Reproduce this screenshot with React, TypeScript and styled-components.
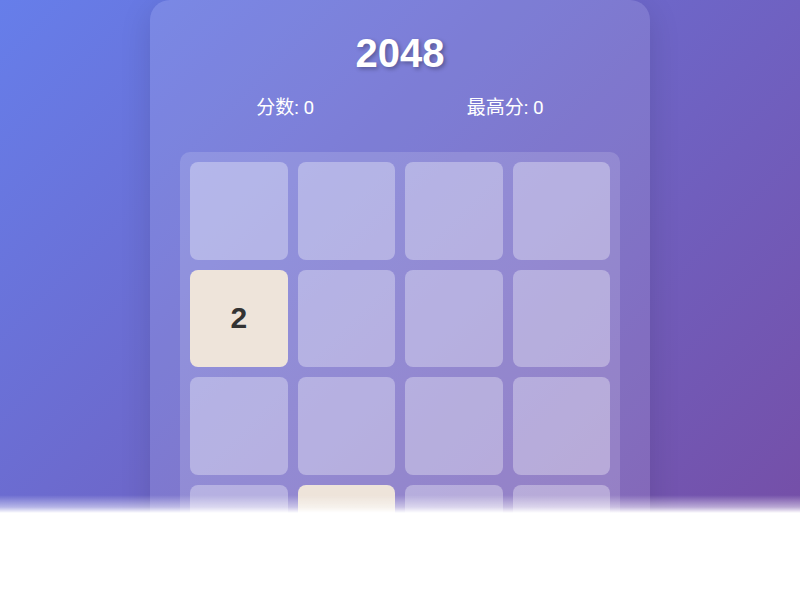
import styled, { createGlobalStyle } from 'styled-components'

const GlobalStyle = createGlobalStyle`
    * {
        box-sizing: border-box;
    }
    body {
        margin: 0;
        font-family: "Liberation Sans", "Noto Sans CJK SC", sans-serif;
    }
`

const Page = styled.div`
    min-height: 100vh;
    background: linear-gradient(135deg, #667eea 0%, #764ba2 100%);
    display: flex;
    justify-content: center;
    overflow: hidden;
`

const Card = styled.div`
    width: 500px;
    padding: 24px 30px 30px;
    background: rgba(255, 255, 255, 0.12);
    border-radius: 20px;
    box-shadow: 0 8px 32px rgba(0, 0, 0, 0.12);
`

const Title = styled.h1`
    margin: 0;
    text-align: center;
    color: #fff;
    font-size: 40px;
    line-height: 58px;
    font-weight: 700;
    text-shadow: 2px 2px 4px rgba(0, 0, 0, 0.3);
`

const Scores = styled.div`
    margin-top: 14px;
    display: flex;
    justify-content: space-around;
    color: #fff;
    font-family: Roboto, "Noto Sans CJK SC", sans-serif;
    font-size: 19px;
    line-height: 24px;
`

const Board = styled.div`
    margin-top: 32px;
    padding: 10px;
    display: grid;
    grid-template-columns: repeat(4, 1fr);
    gap: 10px;
    background: rgba(255, 255, 255, 0.15);
    border-radius: 10px;
`

const Tile = styled.div<{ $value: number }>`
    height: 97.5px;
    border-radius: 8px;
    display: flex;
    align-items: center;
    justify-content: center;
    font-size: 30px;
    font-weight: 700;
    color: #333;
    background: ${p => (p.$value ? '#eee4da' : 'rgba(255, 255, 255, 0.33)')};
`

const Fade = styled.div`
    position: fixed;
    left: 0;
    right: 0;
    bottom: 0;
    height: 105px;
    background: linear-gradient(
        to bottom,
        rgba(255, 255, 255, 0) 0px,
        rgba(255, 255, 255, 0.5) 12px,
        #fff 18px
    );
`

const board = [
    [0, 0, 0, 0],
    [2, 0, 0, 0],
    [0, 0, 0, 0],
    [0, 2, 0, 0],
]

export default function App() {
    return (
        <>
            <GlobalStyle />
            <Page>
                <Card>
                    <Title>2048</Title>
                    <Scores>
                        <span>分数: 0</span>
                        <span>最高分: 0</span>
                    </Scores>
                    <Board>
                        {board.flat().map((value, index) => (
                            <Tile key={index} $value={value}>
                                {value || ''}
                            </Tile>
                        ))}
                    </Board>
                </Card>
            </Page>
            <Fade />
        </>
    )
}
